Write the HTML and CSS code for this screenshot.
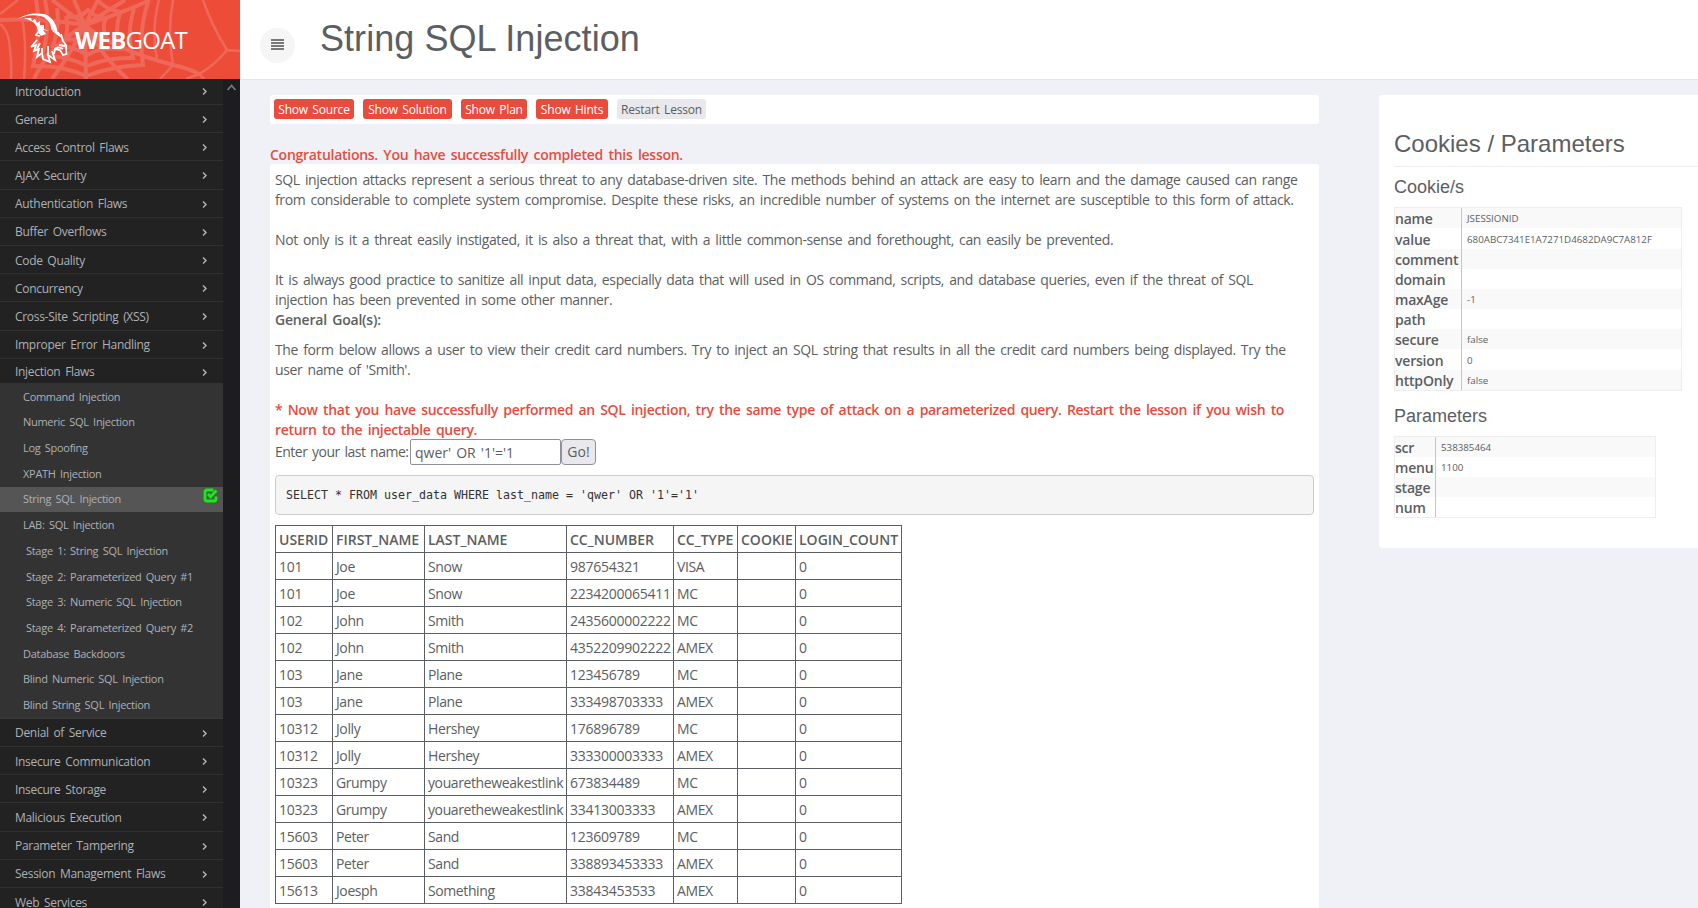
FILE: index.html
```html
<!DOCTYPE html>
<html lang="en">
<head>
<meta charset="utf-8">
<title>WebGoat</title>
<link rel="stylesheet" href="styles.css">
</head>
<body>
<div class="app">
<aside class="side">
  <div class="brand">
    <svg class="brand-art" viewBox="0 0 240 79" width="240" height="79">
      <g class="web">
        <path d="M85 25L52 0M85 25L74 0M85 25L98 0M85 25L125 0M85 25Q125 12 150 0M85 25Q110 48 173 65Q188 68 199 74M85 25Q105 60 128 79M85 25L86 79M85 25Q70 55 52 79M85 25Q50 45 34 79M85 25Q40 18 0 20"/>
        <path d="M66 16Q78 20 88 10Q94 17 106 18Q101 28 107 38Q96 37 88 44Q78 38 65 40Q69 28 66 16M57 8Q60 25 53 46Q73 45 87 55Q101 47 120 49Q114 33 120 12Q104 9 98 0M45 0Q51 26 42 56Q66 55 87 66Q108 57 133 58Q126 34 134 9M36 0Q42 28 33 66Q62 65 86 76Q112 66 143 65Q138 33 148 2"/>
      </g>
      <g class="web thin">
        <path d="M203 0Q212 26 227 50L240 51M227 50Q214 66 199 74L204 79M199 74L186 79M173 0Q167 32 173 65L160 79M159 0Q151 30 157 60M0 24Q9 30 10 50Q12 65 11 79M22 18Q27 42 24 79M0 14L18 0"/>
      </g>
      <g class="goat">
        <path d="M18.5 19C26 13 36 13 44 14C53 17 57 25 57.5 33L61 38L55 33C53 25 49 19 42 16.5C34 14.5 26 15 18.5 19Z"/>
        <path d="M24 18L31 18L32 21L35 19L37 23L40 21L40 25L44 25L44 29L49 31L43 30L46 34L41 36L38 32L37 27C34 21 29 20 24 18Z"/>
        <path d="M47 17Q54 22 54 32L51 29Q51 22 45 18ZM52 31L59 32L62 38L58 35Z"/>
      </g>
      <g class="face">
        <path d="M61 34L63 41L66 45L66.5 54L63 55L60 50L55 49L54 54M59 45L65 46M55 49Q58 46 63 49M57 34L60 35"/>
        <path d="M39 31L36 35L40 36M37 40L31 47L36 45L34 51L39 49L37 57L42 53L43 59L50 62L48 55L55 60L52 51M42 48L42 53M48 46L48 56M40 43L37 49"/>
      </g>
    </svg>
    <div class="brand-name"><b>WEB</b>GOAT</div>
  </div>
  <div class="side-body">
    <nav class="menu" id="menu"></nav>
    <div class="scroll"><svg viewBox="0 0 17 17" width="17" height="17"><path d="M4.5 11L8.5 6.5L12.5 11"/></svg></div>
  </div>
</aside>
<div class="page">
  <header class="top">
    <button class="burger" aria-label="Menu"><i></i><i></i><i></i><i></i></button>
    <h1>String SQL Injection</h1>
  </header>
  <div class="cols">
    <main class="lesson">
      <div class="toolbar">
        <button class="btn b1">Show Source</button><button class="btn b2">Show Solution</button><button class="btn b3">Show Plan</button><button class="btn b4">Show Hints</button><button class="btn b5 plain">Restart Lesson</button>
      </div>
      <div class="message">Congratulations. You have successfully completed this lesson.</div>
      <section class="content">
        <p>SQL injection attacks represent a serious threat to any database-driven site. The methods behind an attack are easy to learn and the damage caused can range<br>from considerable to complete system compromise. Despite these risks, an incredible number of systems on the internet are susceptible to this form of attack.<br><br>Not only is it a threat easily instigated, it is also a threat that, with a little common-sense and forethought, can easily be prevented.<br><br>It is always good practice to sanitize all input data, especially data that will used in OS command, scripts, and database queries, even if the threat of SQL<br>injection has been prevented in some other manner.<br><b>General Goal(s):</b></p>
        <p class="goal">The form below allows a user to view their credit card numbers. Try to inject an SQL string that results in all the credit card numbers being displayed. Try the<br>user name of 'Smith'.</p>
        <p class="next">* Now that you have successfully performed an SQL injection, try the same type of attack on a parameterized query. Restart the lesson if you wish to<br>return to the injectable query.</p>
        <form class="ask"><label for="acct">Enter your last name:</label><input id="acct" value="qwer' OR '1'='1"><button type="button">Go!</button></form>
        <pre>SELECT * FROM user_data WHERE last_name = 'qwer' OR '1'='1'</pre>
        <table class="data">
          <colgroup><col class="c1"><col class="c2"><col class="c3"><col class="c4"><col class="c5"><col class="c6"><col class="c7"></colgroup>
          <thead><tr><th>USERID</th><th>FIRST_NAME</th><th>LAST_NAME</th><th>CC_NUMBER</th><th>CC_TYPE</th><th>COOKIE</th><th>LOGIN_COUNT</th></tr></thead>
          <tbody id="rows"></tbody>
        </table>
      </section>
    </main>
    <aside class="info">
      <h2>Cookies / Parameters</h2>
      <h3>Cookie/s</h3>
      <table class="kv cookies">
        <tr><th>name</th><td>JSESSIONID</td></tr>
        <tr class="tall"><th>value</th><td>680ABC7341E1A7271D4682DA9C7A812F</td></tr>
        <tr><th>comment</th><td></td></tr>
        <tr><th>domain</th><td></td></tr>
        <tr><th>maxAge</th><td>-1</td></tr>
        <tr><th>path</th><td></td></tr>
        <tr><th>secure</th><td>false</td></tr>
        <tr class="tall"><th>version</th><td>0</td></tr>
        <tr><th>httpOnly</th><td>false</td></tr>
      </table>
      <h3 class="second">Parameters</h3>
      <table class="kv params">
        <tr><th>scr</th><td>538385464</td></tr>
        <tr><th>menu</th><td>1100</td></tr>
        <tr><th>stage</th><td></td></tr>
        <tr><th>num</th><td></td></tr>
      </table>
    </aside>
  </div>
</div>
</div>
<script src="app.js"></script>
</body>
</html>
```

FILE: styles.css
```css
* { box-sizing: border-box; }
body { margin: 0; background: #f0f1f7; color: #5b5e62; font: 14px/20px "Open Sans", "Noto Sans", sans-serif; overflow: hidden; }
button, input { font: inherit; color: inherit; margin: 0; }
h1, h2, h3 { font-family: "Liberation Sans", Arial, sans-serif; font-weight: 400; margin: 0; }
.app { display: flex; height: 908px; overflow: hidden; }

.side { width: 240px; flex: none; display: flex; flex-direction: column; background: #1d1d1f; }
.brand { height: 79px; flex: none; background: #ed4c38; position: relative; overflow: hidden; }
.brand-art { position: absolute; left: 0; top: 0; }
.web { fill: none; stroke: #ef695b; stroke-width: 4; }
.web.thin { stroke-width: 2.5; }
.goat { fill: #fff; }
.face { fill: none; stroke: #fff; stroke-width: 1.8; stroke-linejoin: miter; }
.brand-name { position: relative; padding: 25px 0 0 75px; font-size: 24px; line-height: 30px; letter-spacing: -.75px; color: #fff; }
.side-body { display: flex; flex: 1; min-height: 0; }
.menu { width: 223px; overflow: hidden; color: #adb1b5; background: #222; }
.item { height: 28.2px; display: flex; align-items: center; justify-content: space-between; padding: 2px 15px 0 15px; border-bottom: 1px solid #303030; font-size: 12px; line-height: 20px; letter-spacing: -.3px; word-spacing: 1.9px; }
.item:first-child { height: 26px; padding-top: 0; }
.item.open { border-bottom-color: #333; height: 25.2px; padding-top: 3px; }
.item svg { width: 7px; height: 9px; fill: none; stroke: #adb1b5; stroke-width: 1.5; }
.sub { background: #333; border-bottom: 1px solid #3a3a3a; font-size: 11px; }
.subitem { height: 25.7px; display: flex; align-items: center; justify-content: space-between; padding: 0 5px 0 23px; letter-spacing: -.29px; word-spacing: 1.8px; line-height: 18px; }
.subitem.stage { padding-left: 26px; }
.subitem.active { background: #555; }
.subitem svg { width: 15px; height: 15px; margin-top: -7px; fill: none; stroke: #0cf20c; stroke-width: 2.8; }
.scroll { width: 17px; }
.scroll svg { display: block; fill: none; stroke: #777; stroke-width: 1.8; }

.page { flex: 1; min-width: 0; }
.top { height: 80px; background: #fff; border-bottom: 1px solid #e4e5e9; display: flex; align-items: flex-start; padding: 0 0 0 20px; }
.burger { width: 35px; height: 35px; margin-top: 28px; border: 0; border-radius: 50%; background: #f5f5f5; display: flex; flex-direction: column; align-items: center; justify-content: center; gap: 1px; padding: 0 0 2px; }
.burger i { width: 13px; height: 2px; background: #76787a; }
h1 { font-size: 36px; line-height: 40px; margin: 19px 0 0 25px; letter-spacing: .05px; }
.cols { display: flex; align-items: flex-start; justify-content: space-between; padding: 15px 0 0 30px; }
.lesson { width: 1049px; }
.toolbar { height: 29px; background: #fff; border-radius: 3px; padding: 4px 0 0 4px; display: flex; gap: 9px; align-items: flex-start; }
.btn { height: 20px; padding: 1px 0 0; border: 0; border-radius: 3px; background: #e84c3d; color: #fff; font-size: 12px; line-height: 19px; letter-spacing: -.2px; word-spacing: 1.5px; white-space: nowrap; }
.btn.plain { background: #e8e8ed; color: #5b5e62; }
.b1 { width: 80px; } .b2 { width: 89px; } .b3 { width: 66px; } .b4 { width: 72px; } .b5 { width: 89px; }
.message { margin-top: 21px; height: 19px; color: #e84c3d; font-weight: 600; letter-spacing: -.27px; word-spacing: 2.1px; white-space: nowrap; }
.content { background: #fff; border-radius: 3px; padding: 6px 5px 0; height: 760px; white-space: nowrap; }
p, .ask label { margin: 0; letter-spacing: -.38px; word-spacing: 1.9px; }
p b { font-weight: 600; letter-spacing: -.2px; }
.goal { margin-top: 10px; }
.next { margin-top: 20px; color: #e84c3d; font-weight: 600; letter-spacing: -.31px; word-spacing: 2px; }
.ask { display: flex; align-items: center; height: 26px; margin-top: -1px; }
.ask label { width: 135px; letter-spacing: -.5px; word-spacing: 1.5px; }
.ask input { width: 151px; height: 26px; border: 1px solid #8f8f9d; border-radius: 2px; padding: 0 4px; background: #fff; word-spacing: 1.5px; }
.ask button { width: 35px; height: 26px; border: 1px solid #8f8f9d; border-radius: 4px; background: #e9e9ed; padding: 0; }
pre { margin: 10px 0; height: 40px; padding: 10px; border: 1px solid #ccc; border-radius: 4px; background: #f5f5f5; color: #333; font: 11.63px/18px "DejaVu Sans Mono", monospace; }
.data { table-layout: fixed; width: 627px; border-collapse: collapse; }
.data th, .data td { border: 1px solid #5b5e62; height: 27px; padding: 2px 3px 0; text-align: left; line-height: 20px; }
.data th { font-weight: 600; }
.data td { letter-spacing: -.4px; }
.data td:first-child, .data td:nth-child(4) { letter-spacing: -.25px; }
.c1 { width: 57px; } .c2 { width: 92px; } .c3 { width: 142px; } .c4 { width: 107px; } .c5 { width: 64px; } .c6 { width: 58px; } .c7 { width: 106px; }

.info { width: 319px; height: 453px; background: #fff; border-radius: 3px 0 0 3px; padding: 34px 0 0 15px; }
h2 { font-size: 24px; line-height: 30px; height: 38px; border-bottom: 1px solid #eee; }
h3 { font-size: 18px; line-height: 20px; margin: 10px 0; }
h3.second { margin: 15px 0 10px; }
.kv { border-collapse: separate; border-spacing: 0; border: 1px solid #eee; table-layout: fixed; }
.kv tr:nth-child(odd) { background: #f9f9f9; }
.kv th { height: 20px; padding: 1px 0 0; text-align: left; font-weight: 600; line-height: 19px; letter-spacing: -.2px; border-right: 1px solid #c5c5c5; }
.kv td { padding: 1px 5px 0; font-size: 9.75px; line-height: 19px; vertical-align: top; }
.kv .tall th { height: 21px; }
.kv .tall td { padding-top: 2px; }
.cookies { width: 288px; } .cookies th { width: 67px; }
.params { width: 262px; } .params th { width: 41px; }
```

FILE: app.js
```js
const sub = ["Command Injection", "Numeric SQL Injection", "Log Spoofing", "XPATH Injection", "String SQL Injection", "LAB: SQL Injection",
  "Stage 1: String SQL Injection", "Stage 2: Parameterized Query #1", "Stage 3: Numeric SQL Injection", "Stage 4: Parameterized Query #2",
  "Database Backdoors", "Blind Numeric SQL Injection", "Blind String SQL Injection"];
const menu = ["Introduction", "General", "Access Control Flaws", "AJAX Security", "Authentication Flaws", "Buffer Overflows", "Code Quality",
  "Concurrency", "Cross-Site Scripting (XSS)", "Improper Error Handling", "Injection Flaws", "Denial of Service", "Insecure Communication",
  "Insecure Storage", "Malicious Execution", "Parameter Tampering", "Session Management Flaws", "Web Services"];
const chevron = '<svg viewBox="0 0 7 9"><path d="M2 1.5L5 4.5L2 7.5"/></svg>';
const check = '<svg viewBox="0 0 15 15"><path d="M10.5 2H4Q2 2 2 4V11Q2 13 4 13H11Q13 13 13 11V8.5M5 6L7.5 8.7L13.5 2.5"/></svg>';
document.getElementById("menu").innerHTML = menu.map(name => {
  const open = name === "Injection Flaws";
  let html = `<div class="item${open ? " open" : ""}"><span>${name}</span>${chevron}</div>`;
  if (open) html += '<div class="sub">' + sub.map(s => {
    const active = s === "String SQL Injection";
    return `<div class="subitem${s.startsWith("Stage") ? " stage" : ""}${active ? " active" : ""}"><span>${s}</span>${active ? check : ""}</div>`;
  }).join("") + "</div>";
  return html;
}).join("");

const rows = [
  [101, "Joe", "Snow", "987654321", "VISA"], [101, "Joe", "Snow", "2234200065411", "MC"],
  [102, "John", "Smith", "2435600002222", "MC"], [102, "John", "Smith", "4352209902222", "AMEX"],
  [103, "Jane", "Plane", "123456789", "MC"], [103, "Jane", "Plane", "333498703333", "AMEX"],
  [10312, "Jolly", "Hershey", "176896789", "MC"], [10312, "Jolly", "Hershey", "333300003333", "AMEX"],
  [10323, "Grumpy", "youaretheweakestlink", "673834489", "MC"], [10323, "Grumpy", "youaretheweakestlink", "33413003333", "AMEX"],
  [15603, "Peter", "Sand", "123609789", "MC"], [15603, "Peter", "Sand", "338893453333", "AMEX"],
  [15613, "Joesph", "Something", "33843453533", "AMEX"]
];
document.getElementById("rows").innerHTML = rows.map(r => "<tr>" + [...r, "", "0"].map(v => `<td>${v}</td>`).join("") + "</tr>").join("");
```
